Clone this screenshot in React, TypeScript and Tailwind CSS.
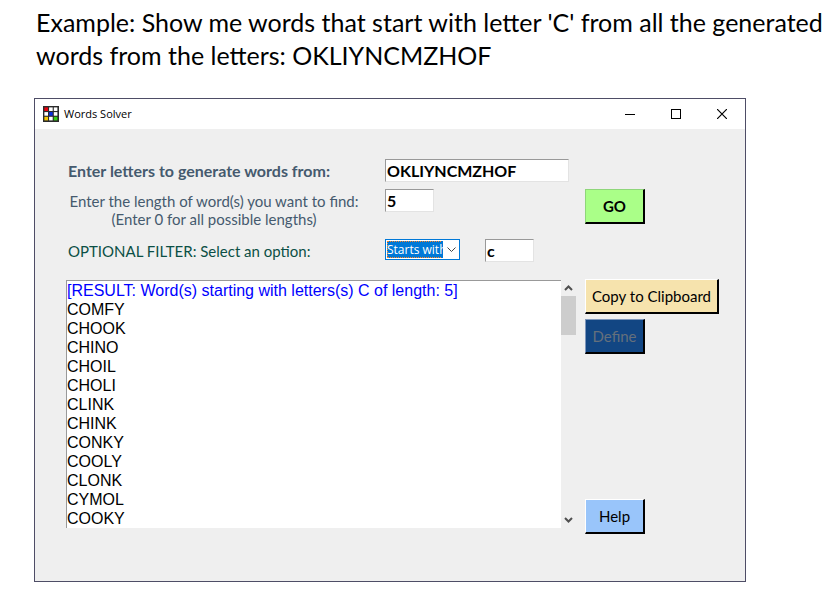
import React from "react";

const words = [
  "COMFY", "CHOOK", "CHINO", "CHOIL", "CHOLI", "CLINK",
  "CHINK", "CONKY", "COOLY", "CLONK", "CYMOL", "COOKY",
];

const field =
  "h-[23px] rounded-none border border-t-[#999] border-l-[#999] border-r-[#e3e3e3] border-b-[#e3e3e3] bg-white px-px py-0 text-base font-bold text-black outline-none";

const button =
  "h-[35px] border border-r-2 border-b-2 border-r-black border-b-black text-[15px]";

function AppIcon() {
  const cells = [
    "#e8000d", "#fff", "#fff",
    "#fff", "#0a2fe0", "#fff",
    "#f5c800", "#fff", "#35d010",
  ];
  return (
    <svg width="16" height="16" viewBox="0 0 16 16" aria-hidden="true">
      <rect width="16" height="16" fill="#2b2b2b" />
      {cells.map((fill, i) => (
        <rect
          key={i}
          x={1.4 + (i % 3) * 4.7}
          y={1.4 + Math.floor(i / 3) * 4.7}
          width="3.6"
          height="3.6"
          fill={fill}
        />
      ))}
    </svg>
  );
}

function TitleBar() {
  return (
    <header className="flex h-[30px] items-center bg-white pl-2">
      <AppIcon />
      <h2 className="ml-[5px] flex-1 font-['Open_Sans','Noto_Sans',sans-serif] text-[11px] leading-4 text-black">
        Words Solver
      </h2>
      <button type="button" aria-label="Minimize" className="grid h-[30px] w-[46px] place-items-center">
        <svg width="10" height="11" shapeRendering="crispEdges" stroke="#000" fill="none">
          <path d="M0 5.5h10" />
        </svg>
      </button>
      <button type="button" aria-label="Maximize" className="grid h-[30px] w-[46px] place-items-center">
        <svg width="10" height="10" shapeRendering="crispEdges" stroke="#000" fill="none">
          <path d="M.5 .5h9v9h-9z" />
        </svg>
      </button>
      <button type="button" aria-label="Close" className="grid h-[30px] w-[46px] place-items-center">
        <svg width="10" height="10" stroke="#000" strokeWidth="1.2" fill="none">
          <path d="M0 0l10 10M10 0L0 10" />
        </svg>
      </button>
    </header>
  );
}

function Form() {
  return (
    <div className="grid grid-cols-[317px_1fr] items-start gap-x-0.5 pb-[18px] text-[15px] leading-[18px] text-[#455a6e]">
      <label htmlFor="letters" className="h-[30px] pt-[3px] pl-0.5 text-base leading-[18px] font-bold">
        Enter letters to generate words from:
      </label>
      <input id="letters" defaultValue="OKLIYNCMZHOF" className={field + " w-[184px]"} />
      <label htmlFor="length" className="h-[50px] w-[294px] pt-[3px] pl-0.5 text-center">
        Enter the length of word(s) you want to find:
        <br />
        (Enter 0 for all possible lengths)
      </label>
      <input id="length" defaultValue="5" className={field + " w-[49px]"} />
      <label htmlFor="filter" className="pt-[3px] pl-0.5 text-[#0b4f45]">
        OPTIONAL FILTER: Select an option:
      </label>
      <div className="flex items-start gap-[25px]">
        <div className="grid bg-white">
          <select
            id="filter"
            className="col-start-1 row-start-1 h-[21px] w-[75px] appearance-none rounded-none border border-[#0078d7] bg-[#0078d7] bg-clip-content p-px pr-[16px] font-['Open_Sans','Noto_Sans',sans-serif] text-[12px] leading-4 text-white outline-none"
          >
            <option>Starts with</option>
          </select>
          <span
            className="pointer-events-none col-start-1 row-start-1 m-0.5 w-[54px] border border-r-0 border-dotted border-[#ff8728]"
            aria-hidden="true"
          />
          <svg
            className="pointer-events-none col-start-1 row-start-1 mr-1 self-center justify-self-end"
            width="9" height="6" fill="none" stroke="#444" aria-hidden="true"
          >
            <path d="M.5 .5l4 4 4-4" />
          </svg>
        </div>
        <input aria-label="Filter letters" defaultValue="c" className={field + " w-[49px]"} />
      </div>
    </div>
  );
}

function Results() {
  return (
    <div className="flex h-[248px]">
      <ul className="flex-1 overflow-hidden border-t border-l border-[#999] bg-white font-['Liberation_Sans',Arial,sans-serif] text-base leading-[19px] text-black">
        <li className="text-[#0000ff]">[RESULT: Word(s) starting with letters(s) C of length: 5]</li>
        {words.map((word) => (
          <li key={word}>{word}</li>
        ))}
      </ul>
      <div className="flex w-[15px] flex-col">
        <button type="button" aria-label="Scroll up" className="grid h-4 place-items-center">
          <svg width="9" height="6" fill="none" stroke="#505050" strokeWidth="2">
            <path d="M1 5l3.5-3.5L8 5" />
          </svg>
        </button>
        <div className="h-[39px] bg-[#cdcdcd]" />
        <div className="flex-1" />
        <button type="button" aria-label="Scroll down" className="grid h-4 place-items-center">
          <svg width="9" height="6" fill="none" stroke="#505050" strokeWidth="2">
            <path d="M1 1l3.5 3.5L8 1" />
          </svg>
        </button>
      </div>
    </div>
  );
}

export default function App() {
  return (
    <main className="min-h-screen bg-white pt-1.5 pb-6 font-['Lato','Liberation_Sans',sans-serif]">
      <h1 className="pl-9 text-[25px] leading-[33px] text-black">
        Example: Show me words that start with letter 'C' from all the generated words from the
        letters: OKLIYNCMZHOF
      </h1>
      <section className="mt-[26px] mr-[94px] ml-[34px] border border-[#4e4d66] bg-[#efefef]">
        <TitleBar />
        <div className="flex gap-[9px] pt-[30px] pr-[26px] pb-[47px] pl-[31px]">
          <div className="min-w-0 flex-1 pb-1.5">
            <Form />
            <Results />
          </div>
          <div className="flex w-[134px] flex-col items-start pt-[30px]">
            <button type="button" className={button + " w-[60px] border-t-[#8fd67a] border-l-[#8fd67a] bg-[#aaff88] font-bold text-black"}>
              GO
            </button>
            <button type="button" className={button + " mt-[55px] w-full border-t-white border-l-white bg-[#f6e3ad] text-black"}>
              Copy to Clipboard
            </button>
            <button type="button" disabled className={button + " mt-[5px] w-[60px] border-t-[#7d96bb] border-l-[#7d96bb] bg-[#124683] text-[#65707c]"}>
              Define
            </button>
            <button type="button" className={button + " mt-auto w-[60px] border-t-white border-l-white bg-[#99c5fa] text-black"}>
              Help
            </button>
          </div>
        </div>
      </section>
    </main>
  );
}
